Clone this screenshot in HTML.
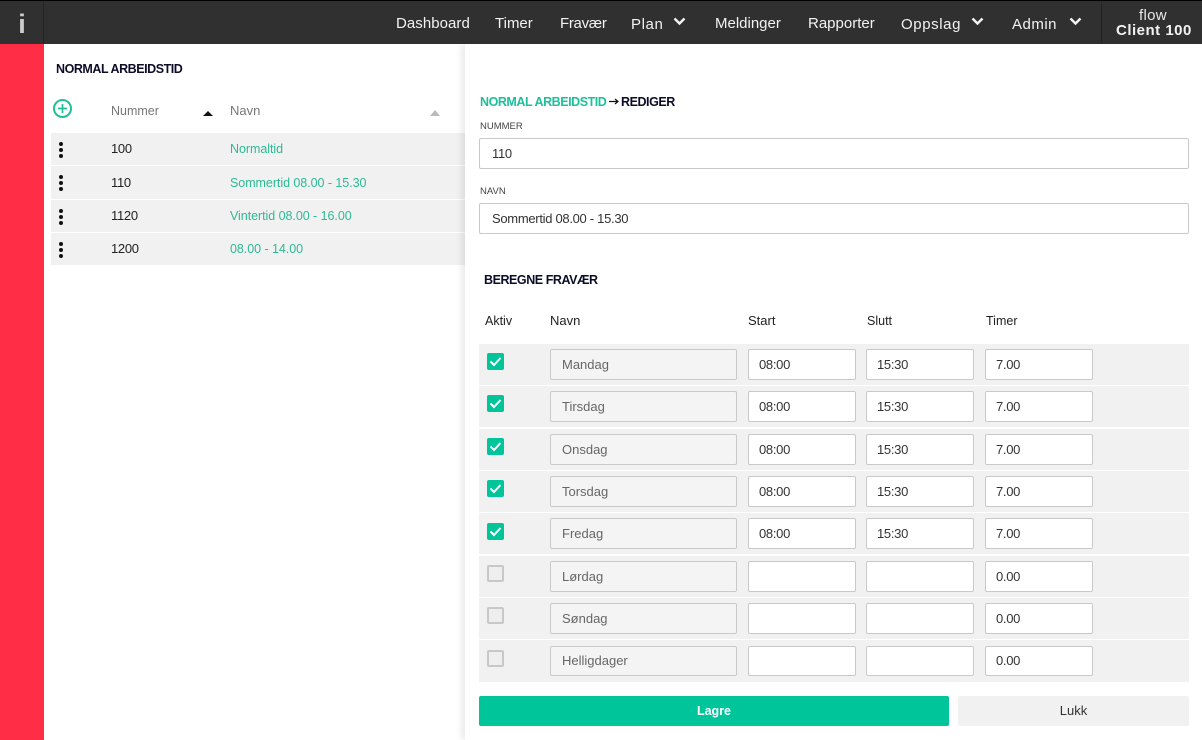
<!DOCTYPE html>
<html><head><meta charset="utf-8"><style>
*{box-sizing:border-box}
html,body{margin:0;padding:0;width:1202px;height:740px;overflow:hidden;background:#fff;font-family:"Liberation Sans",sans-serif;font-size:13px;color:#222}
.a{position:absolute;white-space:nowrap}
.nav{top:15px;color:#f2f2f2;font-size:15px;line-height:18px}
.h{font-weight:bold;font-size:12.5px;letter-spacing:-.45px;color:#0c0c28;line-height:16px}
.g{color:#2cba95;font-size:12.5px;letter-spacing:-.05px}
.d{letter-spacing:-.3px}
.rowl{position:absolute;left:51px;width:414px;background:#f1f1f1}
.dots{position:absolute;left:59px;width:4px;height:4px;border-radius:50%;background:#111;box-shadow:0 6px 0 #111,0 12px 0 #111}
.row{position:absolute;left:479px;width:710px;height:41px;background:#f1f1f1}
.in{position:absolute;height:31px;border:1px solid #c9c9c9;border-radius:2px;background:#fff;line-height:29px;padding-left:10px;font-size:13px;letter-spacing:-.3px;color:#333;white-space:nowrap}
.nm{left:550px;width:187px;background:#f4f4f4;color:#666;padding-left:11px;letter-spacing:0}
.s{left:748px;width:108px}.e{left:866px;width:108px}.t{left:985px;width:108px}
.c{position:absolute;left:487px;width:17px;height:17px;border-radius:2px;background:#00c49a}
.c svg{position:absolute;left:2px;top:3px}
.u{position:absolute;left:487px;width:17px;height:17px;border-radius:2px;border:2px solid #c8c8c8;background:#eee}
</style></head><body>
<div class="a" style="left:0;top:0;width:1202px;height:44px;background:#303030;border-top:1px solid #000"></div>
<div class="a" style="left:43px;top:1px;width:1px;height:43px;background:#222"></div>
<div class="a" style="left:1101px;top:1px;width:1px;height:43px;background:#222"></div>
<div class="a" style="left:0;top:10px;width:44px;text-align:center;color:#ccc;font-size:27px;line-height:28px;font-weight:bold">i</div>
<div class="a nav" style="left:396px;letter-spacing:.05px">Dashboard</div>
<div class="a nav" style="left:495px">Timer</div>
<div class="a nav" style="left:560px;letter-spacing:-.3px">Fravær</div>
<div class="a nav" style="left:631px;top:16px;letter-spacing:.6px">Plan</div>
<div class="a nav" style="left:715px">Meldinger</div>
<div class="a nav" style="left:808px">Rapporter</div>
<div class="a nav" style="left:901px;top:16px;letter-spacing:.6px">Oppslag</div>
<div class="a nav" style="left:1012px;top:16px;letter-spacing:.5px">Admin</div>
<svg class="a" style="left:673px;top:17px" width="13" height="9"><path d="M1.500 1.500L6.500 6.500L11.500 1.500" fill="none" stroke="#f2f2f2" stroke-width="2.400"/></svg>
<svg class="a" style="left:971px;top:17px" width="13" height="9"><path d="M1.500 1.500L6.500 6.500L11.500 1.500" fill="none" stroke="#f2f2f2" stroke-width="2.400"/></svg>
<svg class="a" style="left:1069px;top:17px" width="13" height="9"><path d="M1.500 1.500L6.500 6.500L11.500 1.500" fill="none" stroke="#f2f2f2" stroke-width="2.400"/></svg>
<div class="a" style="left:1139px;top:8px;color:#e8e8e8;font-size:15px;line-height:16px;letter-spacing:.3px">flow</div>
<div class="a" style="left:1116px;top:22px;color:#f2f2f2;font-size:15px;line-height:18px;font-weight:bold;letter-spacing:.5px">Client 100</div>

<div class="a" style="left:0;top:44px;width:44px;height:696px;background:#ff2d46"></div>

<div class="a h" style="left:56px;top:61px">NORMAL ARBEIDSTID</div>
<svg class="a" style="left:53px;top:99px" width="20" height="20"><circle cx="9.500" cy="9.500" r="8.500" fill="none" stroke="#1fc09a" stroke-width="2"/><path d="M9.500 5v9M5 9.500h9" stroke="#1fc09a" stroke-width="1.700"/></svg>
<div class="a" style="left:111px;top:103px;color:#777;line-height:16px;font-size:12.5px">Nummer</div>
<div class="a" style="left:230px;top:103px;color:#777;line-height:16px">Navn</div>
<svg class="a" style="left:203px;top:111px" width="10" height="5"><path d="M0 5L5 0L10 5Z" fill="#111"/></svg>
<svg class="a" style="left:430px;top:110px" width="10" height="6"><path d="M0 6L5 0L10 6Z" fill="#bbb"/></svg>

<div class="rowl" style="top:133px;height:32px"></div>
<div class="rowl" style="top:166px;height:33px"></div>
<div class="rowl" style="top:200px;height:32px"></div>
<div class="rowl" style="top:233px;height:32px"></div>
<div class="dots" style="top:142px"></div>
<div class="dots" style="top:175px"></div>
<div class="dots" style="top:209px"></div>
<div class="dots" style="top:242px"></div>
<div class="a d" style="left:111px;top:141px;line-height:16px">100</div>
<div class="a d" style="left:111px;top:175px;line-height:16px">110</div>
<div class="a d" style="left:111px;top:208px;line-height:16px">1120</div>
<div class="a d" style="left:111px;top:241px;line-height:16px">1200</div>
<div class="a g" style="left:230px;top:141px;line-height:16px">Normaltid</div>
<div class="a g" style="left:230px;top:175px;line-height:16px">Sommertid 08.00 - 15.30</div>
<div class="a g" style="left:230px;top:208px;line-height:16px">Vintertid 08.00 - 16.00</div>
<div class="a g" style="left:230px;top:241px;line-height:16px">08.00 - 14.00</div>

<div class="a" style="left:465px;top:44px;width:737px;height:696px;background:#fff;box-shadow:-4px 0 6px rgba(0,0,0,.08)"></div>

<div class="a h" style="left:480px;top:94px;color:#1cc09a">NORMAL ARBEIDSTID</div>
<svg class="a" style="left:609px;top:98px" width="10" height="7"><path d="M0 3.500H8M6 1L9 3.500L6 6" fill="none" stroke="#111" stroke-width="1.200"/></svg>
<div class="a h" style="left:621px;top:94px">REDIGER</div>

<div class="a" style="left:480px;top:120px;font-size:9.500px;line-height:13px;color:#444">NUMMER</div>
<div class="in" style="left:479px;top:138px;width:710px;padding-left:12px">110</div>
<div class="a" style="left:480px;top:185px;font-size:9.500px;line-height:13px;color:#444">NAVN</div>
<div class="in" style="left:479px;top:203px;width:710px;padding-left:12px">Sommertid 08.00 - 15.30</div>

<div class="a h" style="left:484px;top:272px">BEREGNE FRAVÆR</div>
<div class="a" style="left:485px;top:313px;line-height:16px;font-size:12.500px">Aktiv</div>
<div class="a" style="left:550px;top:313px;line-height:16px">Navn</div>
<div class="a" style="left:748px;top:313px;line-height:16px">Start</div>
<div class="a" style="left:867px;top:313px;line-height:16px;font-size:12.500px">Slutt</div>
<div class="a" style="left:986px;top:313px;line-height:16px;font-size:12.500px">Timer</div>

<div class="row" style="top:344px"></div>
<div class="row" style="top:386px"></div>
<div class="row" style="top:429px"></div>
<div class="row" style="top:471px"></div>
<div class="row" style="top:513px"></div>
<div class="row" style="top:556px"></div>
<div class="row" style="top:598px"></div>
<div class="row" style="top:640px;height:42px"></div>

<div class="c" style="top:353px"><svg width="13" height="11"><path d="M1.500 5.500L5 9L11.500 2" fill="none" stroke="#fff" stroke-width="2"/></svg></div>
<div class="c" style="top:395px"><svg width="13" height="11"><path d="M1.500 5.500L5 9L11.500 2" fill="none" stroke="#fff" stroke-width="2"/></svg></div>
<div class="c" style="top:438px"><svg width="13" height="11"><path d="M1.500 5.500L5 9L11.500 2" fill="none" stroke="#fff" stroke-width="2"/></svg></div>
<div class="c" style="top:480px"><svg width="13" height="11"><path d="M1.500 5.500L5 9L11.500 2" fill="none" stroke="#fff" stroke-width="2"/></svg></div>
<div class="c" style="top:523px"><svg width="13" height="11"><path d="M1.500 5.500L5 9L11.500 2" fill="none" stroke="#fff" stroke-width="2"/></svg></div>
<div class="u" style="top:565px"></div>
<div class="u" style="top:607px"></div>
<div class="u" style="top:650px"></div>

<div class="in nm" style="top:349px">Mandag</div><div class="in s" style="top:349px">08:00</div><div class="in e" style="top:349px">15:30</div><div class="in t" style="top:349px">7.00</div>
<div class="in nm" style="top:391px">Tirsdag</div><div class="in s" style="top:391px">08:00</div><div class="in e" style="top:391px">15:30</div><div class="in t" style="top:391px">7.00</div>
<div class="in nm" style="top:434px">Onsdag</div><div class="in s" style="top:434px">08:00</div><div class="in e" style="top:434px">15:30</div><div class="in t" style="top:434px">7.00</div>
<div class="in nm" style="top:476px">Torsdag</div><div class="in s" style="top:476px">08:00</div><div class="in e" style="top:476px">15:30</div><div class="in t" style="top:476px">7.00</div>
<div class="in nm" style="top:518px">Fredag</div><div class="in s" style="top:518px">08:00</div><div class="in e" style="top:518px">15:30</div><div class="in t" style="top:518px">7.00</div>
<div class="in nm" style="top:561px">Lørdag</div><div class="in s" style="top:561px"></div><div class="in e" style="top:561px"></div><div class="in t" style="top:561px">0.00</div>
<div class="in nm" style="top:603px">Søndag</div><div class="in s" style="top:603px"></div><div class="in e" style="top:603px"></div><div class="in t" style="top:603px">0.00</div>
<div class="in nm" style="top:646px;height:30px;line-height:28px">Helligdager</div><div class="in s" style="top:646px;height:30px"></div><div class="in e" style="top:646px;height:30px"></div><div class="in t" style="top:646px;height:30px;line-height:28px">0.00</div>

<div class="a" style="left:479px;top:696px;width:470px;height:30px;background:#00c49a;border-radius:2px;color:#fff;text-align:center;line-height:30px;font-weight:bold;font-size:12.500px">Lagre</div>
<div class="a" style="left:958px;top:696px;width:231px;height:30px;background:#f1f1f1;border-radius:2px;color:#333;text-align:center;line-height:30px;font-size:13px">Lukk</div>
</body></html>
